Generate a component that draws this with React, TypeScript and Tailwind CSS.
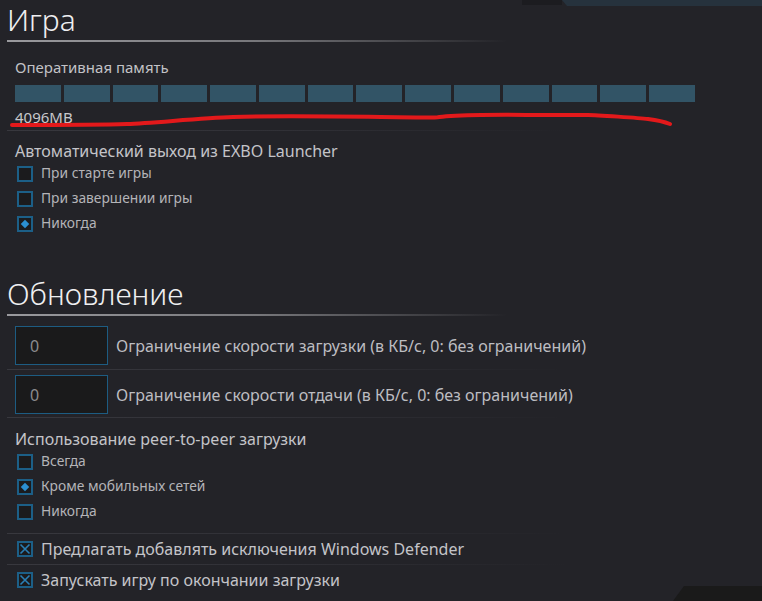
const Sep = () => (
  <div className="h-px w-[560px] bg-gradient-to-r from-[#38383e] via-[#303036] to-transparent" />
);

function Box({ mark }: { mark?: "dot" | "x" }) {
  return (
    <span className="relative flex h-[16px] w-[16px] shrink-0 items-center justify-center border-2 border-[#1c5f87] bg-[#1b1b1d]">
      {mark === "dot" && <span className="h-[6px] w-[6px] rotate-45 bg-[#2b8fd1]" />}
      {mark === "x" && (
        <svg width="12" height="12" viewBox="0 0 12 12">
          <path d="M1.5 1.5 L10.5 10.5 M10.5 1.5 L1.5 10.5" stroke="#2a7fb5" strokeWidth="1.6" />
        </svg>
      )}
    </span>
  );
}

function Option({ label, mark }: { label: string; mark?: "dot" | "x" }) {
  return (
    <div className="flex h-[25px] items-center gap-[8px] pl-[2px]">
      <Box mark={mark} />
      <span className="text-[13.8px] text-[#b4b4b8]">{label}</span>
    </div>
  );
}

function Heading({ title }: { title: string }) {
  return (
    <div>
      <div className="flex h-[40px] items-end">
        <h1 className="text-[30px] font-light leading-[40px] text-[#efeff1]">{title}</h1>
      </div>
      <div className="h-[2px] w-[500px] bg-gradient-to-r from-[#9a9a9e] via-[#77777b] to-transparent" />
    </div>
  );
}

function SpeedRow({ label }: { label: string }) {
  return (
    <div className="flex h-[39px] items-center gap-[8px] pl-[8px]">
      <div className="flex h-[39px] w-[93px] items-center border border-[#1d5c82] bg-[#1a1a1b] pl-[14px] text-[16px] text-[#8b8b8e]">
        0
      </div>
      <span className="text-[16px] text-[#bdbdc1]">{label}</span>
    </div>
  );
}

export default function App() {
  const segments = Array.from({ length: 14 }, (_, i) => i);

  return (
    <div className="relative h-[601px] w-[762px] overflow-hidden bg-[#232328] font-['Noto_Sans',sans-serif]">
      <div className="absolute right-0 top-0 flex h-[6px]">
        <div className="h-[5px] w-[40px] bg-[#1c1c20]" />
        <div className="h-[6px] w-[200px] bg-[#26323d] [clip-path:polygon(0_0,100%_0,100%_100%,5px_100%)]" />
      </div>
      <div className="absolute bottom-0 right-0 h-[15px] w-[89px] bg-[#1a1a1a] [clip-path:polygon(11px_0,100%_0,100%_100%,0_100%)]" />

      <div className="pl-[7px]">
        <Heading title="Игра" />

        <div className="mt-[15px] flex h-[20px] items-center pl-[8px] text-[15px] text-[#c2c2c6]">
          Оперативная память
        </div>
        <div className="mt-[8px] flex w-[688px] gap-[3px] pl-[8px]">
          {segments.map((i) => (
            <div key={i} className="h-[17px] flex-1 bg-[#325466]" />
          ))}
        </div>
        <div className="mt-[5px] flex h-[20px] items-center pl-[8px] text-[15px] text-[#c8c8cc]">
          4096MB
        </div>
        <div className="mt-[3px]">
          <Sep />
        </div>

        <div className="mt-[10px] flex h-[20px] items-center pl-[8px] text-[16px] text-[#c4c4c8]">
          Автоматический выход из EXBO Launcher
        </div>
        <div className="pl-[8px]">
          <Option label="При старте игры" />
          <Option label="При завершении игры" />
          <Option label="Никогда" mark="dot" />
        </div>

        <div className="mt-[38px]">
          <Heading title="Обновление" />
        </div>

        <div className="mt-[10px]">
          <SpeedRow label="Ограничение скорости загрузки (в КБ/с, 0: без ограничений)" />
        </div>
        <div className="mt-[4px]">
          <Sep />
        </div>
        <div className="mt-[5px]">
          <SpeedRow label="Ограничение скорости отдачи (в КБ/с, 0: без ограничений)" />
        </div>
        <div className="mt-[3px]">
          <Sep />
        </div>

        <div className="mt-[11px] flex h-[20px] items-center pl-[8px] text-[16px] text-[#c4c4c8]">
          Использование peer-to-peer загрузки
        </div>
        <div className="pl-[8px]">
          <Option label="Всегда" />
          <Option label="Кроме мобильных сетей" mark="dot" />
          <Option label="Никогда" />
        </div>

        <div className="mt-[9px]">
          <Sep />
        </div>
        <div className="flex h-[30px] items-center gap-[8px] pl-[10px]">
          <Box mark="x" />
          <span className="text-[16px] text-[#c4c4c8]">Предлагать добавлять исключения Windows Defender</span>
        </div>
        <Sep />
        <div className="flex h-[30px] items-center gap-[8px] pl-[10px]">
          <Box mark="x" />
          <span className="text-[16px] text-[#c4c4c8]">Запускать игру по окончании загрузки</span>
        </div>
      </div>

      <svg className="pointer-events-none absolute left-0 top-0" width="762" height="601">
        <path
          d="M12 125 C60 125 100 125 127 124 S200 118 233 117 S300 116 381 117 S420 118 451 116 S520 115 548 115 S580 115 588 115 S640 118 648 119 S665 122 670 124"
          fill="none"
          stroke="#e3191b"
          strokeWidth="4"
          strokeLinecap="round"
        />
      </svg>
    </div>
  );
}
